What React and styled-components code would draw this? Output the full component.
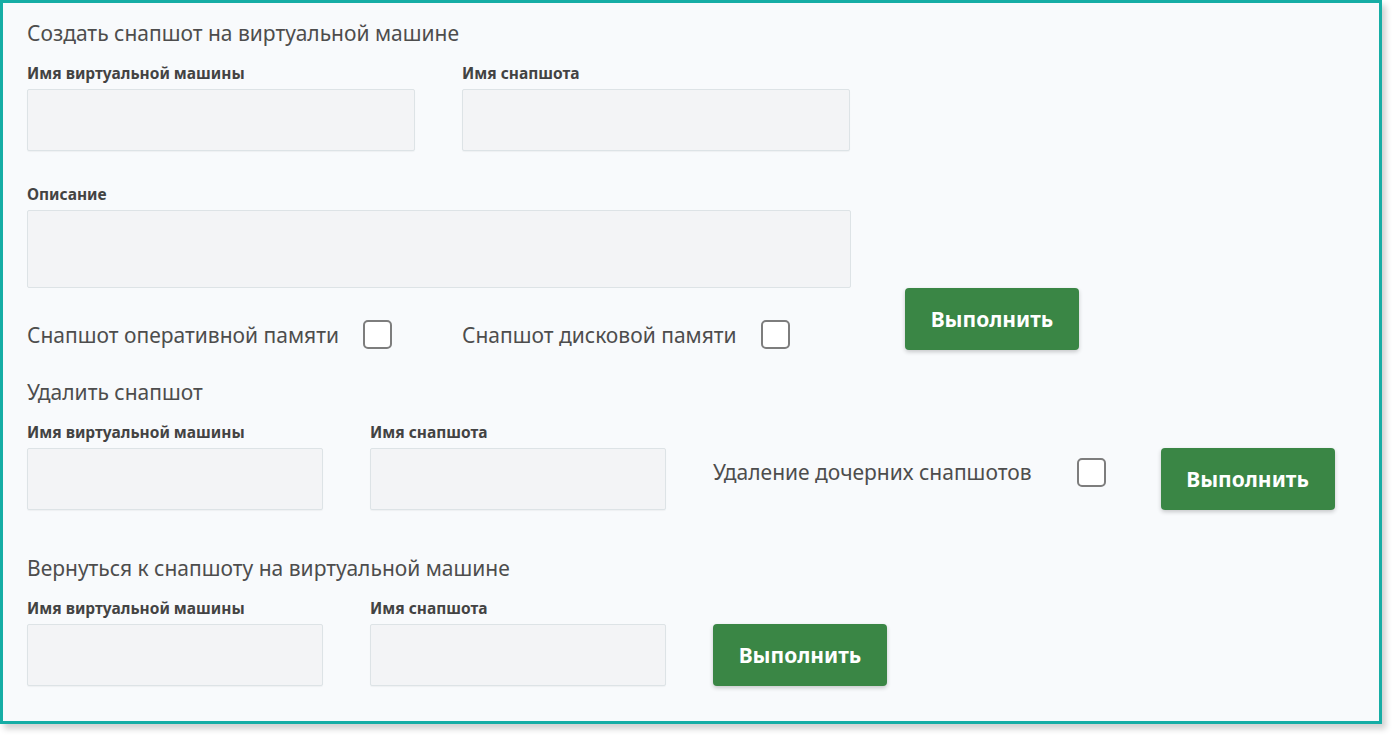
import React from "react";
import styled, { createGlobalStyle } from "styled-components";

const GlobalStyle = createGlobalStyle`
  html, body {
    margin: 0;
    padding: 0;
    background: #ffffff;
  }
  body {
    font-family: "Noto Sans", "Open Sans", sans-serif;
  }
  * {
    box-sizing: border-box;
  }
`;

const Page = styled.div`
  width: 1392px;
  height: 737px;
  padding: 0 10px 13px 0;
`;

const Card = styled.div`
  width: 1382px;
  height: 724px;
  border: 3px solid #16ada5;
  background: #f8fafc;
  box-shadow: 4px 5px 6px rgba(0, 0, 0, 0.18);
  padding: 17px 0 0 24px;
`;

const Section = styled.section`
  margin-top: ${(p) => p.$top || 0}px;
`;

const Title = styled.h3`
  margin: 0;
  font-size: 21px;
  font-weight: 400;
  line-height: 26px;
  color: #4d4d4d;
`;

const Row = styled.div`
  display: flex;
  align-items: ${(p) => p.$align || "flex-end"};
  gap: ${(p) => p.$gap || 47}px;
`;

const Fields = styled.div`
  display: grid;
  grid-template-columns: 388px 388px;
  column-gap: 47px;
`;

const Field = styled.label`
  display: flex;
  flex-direction: column;
  width: ${(p) => p.$w || 388}px;
  grid-column: ${(p) => (p.$wide ? "1 / span 2" : "auto")};
  margin-top: ${(p) => p.$top || 0}px;
`;

const Label = styled.span`
  font-size: 15.5px;
  font-weight: 700;
  line-height: 20px;
  color: #434343;
  margin-bottom: 6px;
`;

const Input = styled.input`
  width: 100%;
  height: ${(p) => p.$h || 62}px;
  background: #f3f4f6;
  border: 1px solid #dde3e6;
  border-radius: 2px;
  box-shadow: 0 1px 1px rgba(0, 0, 0, 0.04);
  outline: none;
  font: inherit;
  padding: 0 10px;
`;

const Textarea = styled.textarea`
  width: 100%;
  height: 78px;
  background: #f3f4f6;
  border: 1px solid #dde3e6;
  border-radius: 2px;
  outline: none;
  resize: none;
  font: inherit;
  padding: 8px 10px;
`;

const CheckRow = styled.div`
  display: flex;
  align-items: center;
  margin-top: 31px;
  height: 31px;
`;

const Check = styled.label`
  display: flex;
  align-items: center;
  gap: 24px;
  width: ${(p) => p.$w || "auto"};
  font-size: 21px;
  color: #4d4d4d;
`;

const Box = styled.input.attrs({ type: "checkbox" })`
  appearance: none;
  margin: 0;
  width: 29px;
  height: 29px;
  border: 2px solid #7d7d7d;
  border-radius: 5px;
  background: #fff;
  flex-shrink: 0;
`;

const Button = styled.button`
  width: 174px;
  height: 62px;
  margin-left: ${(p) => p.$ml || 0}px;
  border: none;
  border-radius: 4px;
  background: #3a8645;
  color: #fff;
  font-family: inherit;
  font-size: 21px;
  font-weight: 700;
  box-shadow: 0 2px 4px rgba(0, 0, 0, 0.2);
  cursor: pointer;
  flex-shrink: 0;
`;

const Side = styled.div`
  display: flex;
  align-items: center;
  gap: 45px;
  height: 62px;
  padding-bottom: 14px;
`;

export default function App() {
  return (
    <>
      <GlobalStyle />
      <Page>
        <Card>
          <Section>
            <Title>Создать снапшот на виртуальной машине</Title>
            <Row $gap={55}>
              <div>
                <Fields>
                  <Field $top={17}>
                    <Label>Имя виртуальной машины</Label>
                    <Input />
                  </Field>
                  <Field $top={17}>
                    <Label>Имя снапшота</Label>
                    <Input />
                  </Field>
                  <Field $wide $w={824} $top={33}>
                    <Label>Описание</Label>
                    <Textarea />
                  </Field>
                </Fields>
                <CheckRow>
                  <Check $w="435px">
                    Снапшот оперативной памяти <Box />
                  </Check>
                  <Check>
                    Снапшот дисковой памяти <Box />
                  </Check>
                </CheckRow>
              </div>
              <Button>Выполнить</Button>
            </Row>
          </Section>

          <Section $top={29}>
            <Title>Удалить снапшот</Title>
            <Row>
              <Field $w={296} $top={17}>
                <Label>Имя виртуальной машины</Label>
                <Input />
              </Field>
              <Field $w={296} $top={17}>
                <Label>Имя снапшота</Label>
                <Input />
              </Field>
              <Side>
                <Check>Удаление дочерних снапшотов</Check>
                <Box />
              </Side>
              <Button $ml={8}>Выполнить</Button>
            </Row>
          </Section>

          <Section $top={45}>
            <Title>Вернуться к снапшоту на виртуальной машине</Title>
            <Row>
              <Field $w={296} $top={17}>
                <Label>Имя виртуальной машины</Label>
                <Input />
              </Field>
              <Field $w={296} $top={17}>
                <Label>Имя снапшота</Label>
                <Input />
              </Field>
              <Button>Выполнить</Button>
            </Row>
          </Section>
        </Card>
      </Page>
    </>
  );
}
